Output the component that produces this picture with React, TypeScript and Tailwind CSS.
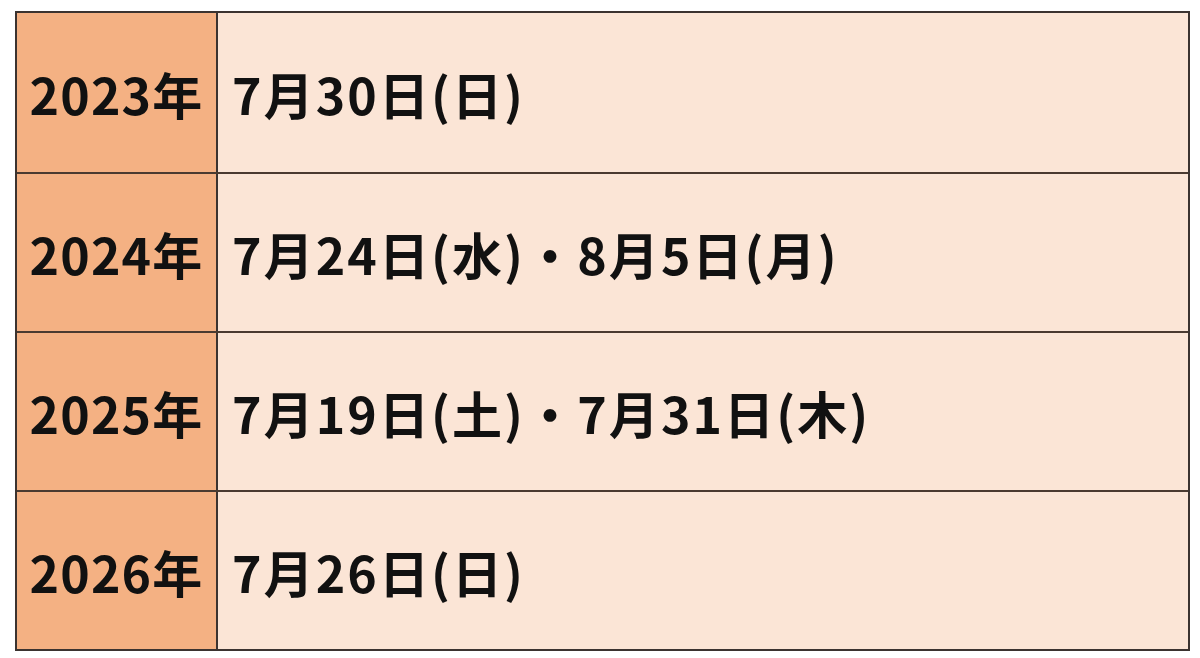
import React from "react";

const rows = [
  ["2023年", "7月30日(日)"],
  ["2024年", "7月24日(水)・8月5日(月)"],
  ["2025年", "7月19日(土)・7月31日(木)"],
  ["2026年", "7月26日(日)"],
];

export default function App() {
  return (
    <div className="w-[1200px] h-[658px] bg-white pt-[11px] pl-[15px]" style={{ fontFamily: '"Noto Sans CJK JP", "Noto Sans", sans-serif' }}>
      <div className="w-[1175px] border-2 border-[#3b3330] flex flex-col">
        {rows.map(([y, d], i) => (
          <div key={y} className={`flex h-[159px] ${i > 0 ? "border-t-2 border-[#4a3a30]" : ""}`}>
            <div className="w-[201px] bg-[#f4b183] border-r-2 border-[#3b3330] flex items-center justify-center text-[50px] font-bold text-[#111] leading-none tracking-[1.2px]">
              {y}
            </div>
            <div className="flex-1 bg-[#fbe5d6] flex items-center pl-[14px] text-[50px] font-bold text-[#111] leading-none tracking-[2.1px]">
              {d}
            </div>
          </div>
        ))}
      </div>
    </div>
  );
}
